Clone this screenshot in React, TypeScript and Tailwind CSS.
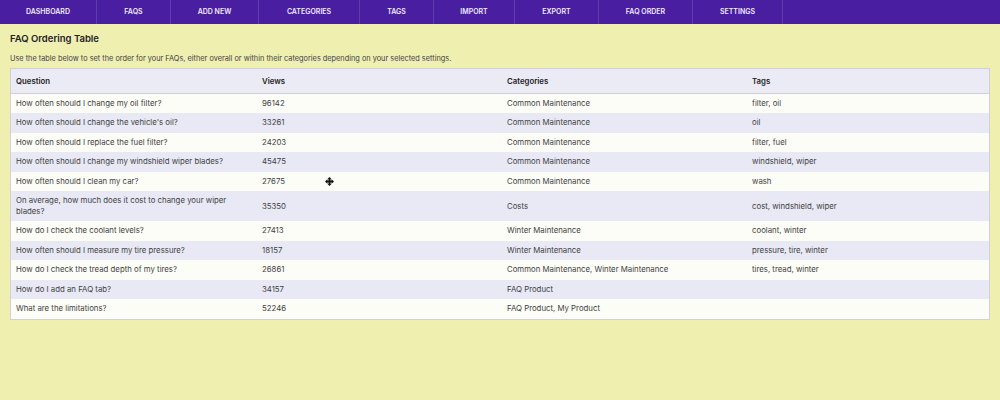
const navItems = [
  { label: "DASHBOARD", width: "w-[97px]" },
  { label: "FAQS", width: "w-[74px]" },
  { label: "ADD NEW", width: "w-[88px]" },
  { label: "CATEGORIES", width: "w-[101px]" },
  { label: "TAGS", width: "w-[74px]" },
  { label: "IMPORT", width: "w-[81px]" },
  { label: "EXPORT", width: "w-[84px]" },
  { label: "FAQ ORDER", width: "w-[94px]" },
  { label: "SETTINGS", width: "w-[90px]" },
];

const rows = [
  ["How often should I change my oil filter?", "96142", "Common Maintenance", "filter, oil"],
  ["How often should I change the vehicle's oil?", "33261", "Common Maintenance", "oil"],
  ["How often should I replace the fuel filter?", "24203", "Common Maintenance", "filter, fuel"],
  ["How often should I change my windshield wiper blades?", "45475", "Common Maintenance", "windshield, wiper"],
  ["How often should I clean my car?", "27675", "Common Maintenance", "wash"],
  ["On average, how much does it cost to change your wiper blades?", "35350", "Costs", "cost, windshield, wiper"],
  ["How do I check the coolant levels?", "27413", "Winter Maintenance", "coolant, winter"],
  ["How often should I measure my tire pressure?", "18157", "Winter Maintenance", "pressure, tire, winter"],
  ["How do I check the tread depth of my tires?", "26861", "Common Maintenance, Winter Maintenance", "tires, tread, winter"],
  ["How do I add an FAQ tab?", "34157", "FAQ Product", ""],
  ["What are the limitations?", "52246", "FAQ Product, My Product", ""],
];

export default function App() {
  return (
    <div className="h-[400px] overflow-hidden bg-[#efefb0] font-['Inter',sans-serif] text-[#3f3f3f]">
      <nav className="flex h-6 bg-[#4a1ea0]">
        {navItems.map((item) => (
          <div
            key={item.label}
            className={`flex items-center justify-center border-r border-[#5f3cae] text-[7px] font-semibold text-[#efe9fb] ${item.width}`}
          >
            {item.label}
          </div>
        ))}
      </nav>

      <div className="px-2.5">
        <h1 className="mt-[8px] text-[9.5px] leading-[14px] font-semibold text-[#222]">FAQ Ordering Table</h1>
        <p className="mt-[7px] text-[7.35px] leading-[12px]">
          Use the table below to set the order for your FAQs, either overall or within their categories depending on your selected settings.
        </p>

        <div className="relative mt-[3px] border border-[#d0d0d8] bg-[#fdfdf8]">
          <table className="w-full table-fixed border-collapse text-left text-[7.8px] leading-[11px]">
            <colgroup>
              <col className="w-[246px]" />
              <col className="w-[245px]" />
              <col className="w-[245px]" />
              <col />
            </colgroup>
            <thead>
              <tr className="h-[24.5px] border-b border-[#cfcfd6] bg-[#ebebf6]">
                <th className="px-[5px] font-semibold text-[#222]">Question</th>
                <th className="px-[5px] font-semibold text-[#222]">Views</th>
                <th className="px-[5px] font-semibold text-[#222]">Categories</th>
                <th className="px-[5px] font-semibold text-[#222]">Tags</th>
              </tr>
            </thead>
            <tbody>
              {rows.map((row, i) => (
                <tr key={row[0]} className={i % 2 === 0 ? "h-[19.5px] bg-[#fdfdf8]" : "h-[19.5px] bg-[#e9e9f6]"}>
                  {row.map((cell, j) => (
                    <td key={j} className="px-[5px] py-1">
                      {cell}
                    </td>
                  ))}
                </tr>
              ))}
            </tbody>
          </table>

          {/* drag cursor */}
          <svg className="absolute top-[108px] left-[314px] h-[9px] w-[9px]" viewBox="0 0 10 10" fill="#111">
            <path d="M5 0 7.4 2.6H6V4H7.4V2.6L10 5 7.4 7.4V6H6V7.4H7.4L5 10 2.6 7.4H4V6H2.6V7.4L0 5 2.6 2.6V4H4V2.6H2.6Z" />
          </svg>
        </div>
      </div>
    </div>
  );
}
